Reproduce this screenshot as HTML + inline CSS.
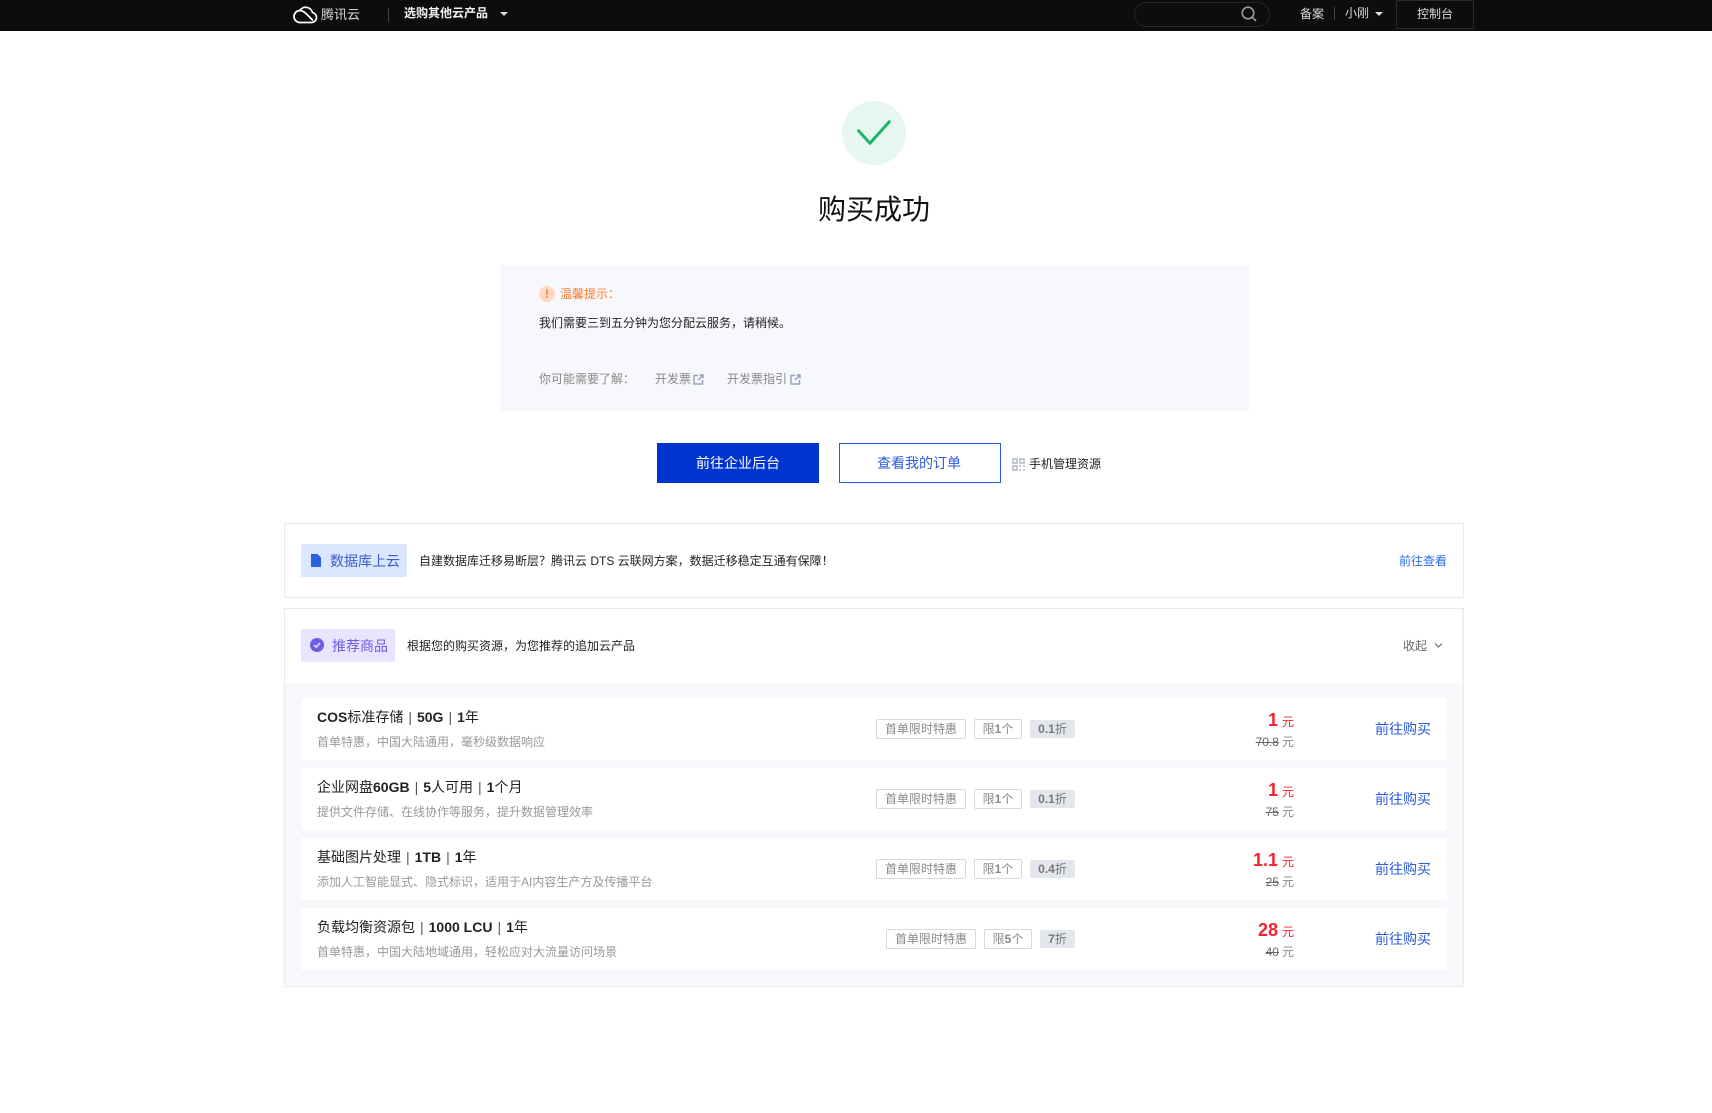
<!DOCTYPE html>
<html lang="zh-CN">
<head>
<meta charset="utf-8">
<title>购买成功</title>
<style>
html,body{margin:0;padding:0;background:#fff}
body{width:1712px;height:1113px;position:relative;overflow:hidden;font-family:"Liberation Sans","Noto Sans CJK SC",sans-serif;font-size:12px;color:#222;filter:blur(.35px)}
.a{position:absolute;white-space:nowrap}
.t{position:absolute;white-space:nowrap;line-height:20px;height:20px}
b{font-weight:700}
.row{position:absolute;left:301px;width:1146px;height:62px;background:#fff}
.name{position:absolute;left:16px;top:9px;font-size:14px;line-height:20px;color:#222;white-space:nowrap}
.name i{font-style:normal;color:#555;font-weight:400;padding:0 5px}
.desc{position:absolute;left:16px;top:34px;font-size:12px;line-height:20px;color:#999;white-space:nowrap}
.tag{position:absolute;top:21px;height:18px;line-height:18px;border:1px solid #d5d9e2;border-radius:2px;text-align:center;color:#888;font-size:12px;box-sizing:content-box}
.tag.g{top:22px;height:18px;border:0;background:#e3e6ec;color:#777}
.pr{position:absolute;right:153px;top:12px;line-height:20px;color:#f5222d;font-size:12px;white-space:nowrap}
.pr b{font-size:18px;margin-right:4px}
.old{position:absolute;right:153px;top:34px;line-height:20px;color:#888;font-size:12px;white-space:nowrap}
.old s{color:#666;margin-right:3px}
.buy{position:absolute;left:1074px;top:21px;line-height:20px;font-size:14px;color:#2b5bdc;white-space:nowrap}
</style>
</head>
<body>
<!-- top bar -->
<div class="a" style="left:0;top:0;width:1712px;height:31px;background:#0c0d0f"></div>
<svg class="a" style="left:293px;top:5px" width="26" height="20" viewBox="0 0 26 20" fill="none" stroke="#fff" stroke-width="1.700" stroke-linecap="round" stroke-linejoin="round"><path d="M7 17.500h11.500a5 5 0 0 0 1-9.900A7 7 0 0 0 6.800 5.500"/><path d="M7 17.500a6 6 0 0 1 0-12c2.500 0 4.500 1.500 6.500 3.500l6 6"/></svg>
<div class="t" style="left:321px;top:5px;font-size:13px;color:#d8d8d8">腾讯云</div>
<div class="a" style="left:388px;top:8px;width:1px;height:14px;background:#444"></div>
<div class="t" style="left:404px;top:3px;font-size:12px;font-weight:700;color:#f2f2f2">选购其他云产品</div>
<div class="a" style="left:500px;top:12px;width:0;height:0;border-left:4px solid transparent;border-right:4px solid transparent;border-top:4px solid #ddd"></div>
<div class="a" style="left:1134px;top:2px;width:134px;height:23px;border:1px solid #24262a;border-radius:13px"></div>
<svg class="a" style="left:1240px;top:5px" width="18" height="18" viewBox="0 0 18 18" fill="none" stroke="#9a9a9a" stroke-width="1.600"><circle cx="8" cy="8" r="5.800"/><path d="M12.200 12.200L16 16"/></svg>
<div class="t" style="left:1300px;top:4px;color:#d8d8d8">备案</div>
<div class="a" style="left:1334px;top:7px;width:1px;height:13px;background:#444"></div>
<div class="t" style="left:1345px;top:3px;color:#d8d8d8">小刚</div>
<div class="a" style="left:1375px;top:12px;width:0;height:0;border-left:4px solid transparent;border-right:4px solid transparent;border-top:4px solid #ddd"></div>
<div class="a" style="left:1396px;top:0;width:76px;height:27px;border:1px solid #2a2c30;border-radius:2px;text-align:center;line-height:27px;color:#d8d8d8">控制台</div>

<!-- success -->
<div class="a" style="left:842px;top:101px;width:64px;height:64px;border-radius:50%;background:#e8f6f0"></div>
<svg class="a" style="left:842px;top:101px" width="64" height="64" fill="none"><path d="M16.500 29.700L28 42.300L47.300 20.700" stroke="#1cb56b" stroke-width="3" stroke-linecap="round" stroke-linejoin="round"/></svg>
<div class="a" style="left:818px;top:190px;width:112px;text-align:center;font-size:28px;line-height:40px;color:#111">购买成功</div>

<!-- notice -->
<div class="a" style="left:500px;top:265px;width:749px;height:146px;background:#f7f8fc"></div>
<div class="a" style="left:539px;top:286px;width:16px;height:16px;border-radius:50%;background:#ffd9c6;color:#ff7a30;font-size:12px;font-weight:700;line-height:16px;text-align:center">!</div>
<div class="t" style="left:560px;top:284px;color:#ff7a30">温馨提示：</div>
<div class="t" style="left:539px;top:313px;color:#222">我们需要三到五分钟为您分配云服务，请稍候。</div>
<div class="t" style="left:539px;top:369px;color:#888">你可能需要了解：</div>
<div class="t" style="left:655px;top:369px;color:#888">开发票</div>
<svg class="a" style="left:693px;top:374px" width="11" height="11" viewBox="0 0 11 11" fill="none" stroke="#9aa5bd" stroke-width="1.500"><path d="M5 1.500H1v8.500h8.500V6M6.500 1H10v3.500M10 1L5 6"/></svg>
<div class="t" style="left:727px;top:369px;color:#888">开发票指引</div>
<svg class="a" style="left:790px;top:374px" width="11" height="11" viewBox="0 0 11 11" fill="none" stroke="#9aa5bd" stroke-width="1.500"><path d="M5 1.500H1v8.500h8.500V6M6.500 1H10v3.500M10 1L5 6"/></svg>

<!-- buttons -->
<div class="a" style="left:657px;top:443px;width:162px;height:40px;background:#0034cf;color:#fff;font-size:14px;line-height:40px;text-align:center">前往企业后台</div>
<div class="a" style="left:839px;top:443px;width:158px;height:38px;padding-right:2px;border:1px solid #2a5ae8;background:#fff;color:#2b5bdc;font-size:14px;line-height:38px;text-align:center">查看我的订单</div>
<svg class="a" style="left:1012px;top:458px" width="13" height="13" viewBox="0 0 13 13" fill="#c3c9d6"><path d="M0 0h6v6H0zM2 2v2h2V2zM7 0h6v6H7zM9 2v2h2V2zM0 7h6v6H0zM2 9v2h2V9zM7 7h2v2H7zM11 7h2v2h-2zM7 11h2v2H7zM11 11h2v2h-2z" fill-rule="evenodd"/></svg>
<div class="t" style="left:1029px;top:454px;color:#222">手机管理资源</div>

<!-- card 1 -->
<div class="a" style="left:284px;top:523px;width:1178px;height:73px;border:1px solid #e8eaef"></div>
<div class="a" style="left:301px;top:544px;width:106px;height:33px;background:#dbe6ff;border-radius:2px"></div>
<svg class="a" style="left:310px;top:554px" width="12" height="13" viewBox="0 0 12 13" fill="#2b5fe0"><path d="M1 0h6.500L11 3.500V13H1z"/></svg>
<div class="t" style="left:330px;top:551px;font-size:14px;color:#3a5ccc">数据库上云</div>
<div class="t" style="left:419px;top:551px;color:#222">自建数据库迁移易断层？腾讯云 DTS 云联网方案，数据迁移稳定互通有保障！</div>
<div class="t" style="left:1399px;top:551px;color:#2a6cf0">前往查看</div>

<!-- card 2 -->
<div class="a" style="left:284px;top:608px;width:1178px;height:377px;border:1px solid #e8eaef;background:#f6f8fc"></div>
<div class="a" style="left:285px;top:609px;width:1177px;height:74px;background:#fff"></div>
<div class="a" style="left:301px;top:629px;width:94px;height:33px;background:#e9e5ff;border-radius:2px"></div>
<svg class="a" style="left:310px;top:638px" width="14" height="14" viewBox="0 0 14 14"><circle cx="7" cy="7" r="7" fill="#6c5ce7"/><path d="M4 7l2.200 2.200L10 5" fill="none" stroke="#e9e5ff" stroke-width="1.500"/></svg>
<div class="t" style="left:332px;top:636px;font-size:14px;color:#6c5ce7">推荐商品</div>
<div class="t" style="left:407px;top:636px;color:#222">根据您的购买资源，为您推荐的追加云产品</div>
<div class="t" style="left:1403px;top:636px;color:#666">收起</div>
<svg class="a" style="left:1434px;top:642px" width="9" height="7" fill="none" stroke="#666" stroke-width="1.100"><path d="M1 1.500l3.500 3.500L8 1.500"/></svg>

<div class="row" style="top:698px">
  <div class="name"><b>COS</b>标准存储<i>|</i><b>50G</b><i>|</i><b>1</b>年</div>
  <div class="desc">首单特惠，中国大陆通用，毫秒级数据响应</div>
  <div class="tag" style="left:575px;width:88px">首单限时特惠</div>
  <div class="tag" style="left:673px;width:46px">限<b>1</b>个</div>
  <div class="tag g" style="left:729px;width:45px"><b>0.1</b>折</div>
  <div class="pr"><b>1</b>元</div>
  <div class="old"><s>70.8</s>元</div>
  <div class="buy">前往购买</div>
</div>
<div class="row" style="top:768px">
  <div class="name">企业网盘<b>60GB</b><i>|</i><b>5</b>人可用<i>|</i><b>1</b>个月</div>
  <div class="desc">提供文件存储、在线协作等服务，提升数据管理效率</div>
  <div class="tag" style="left:575px;width:88px">首单限时特惠</div>
  <div class="tag" style="left:673px;width:46px">限<b>1</b>个</div>
  <div class="tag g" style="left:729px;width:45px"><b>0.1</b>折</div>
  <div class="pr"><b>1</b>元</div>
  <div class="old"><s>75</s>元</div>
  <div class="buy">前往购买</div>
</div>
<div class="row" style="top:838px">
  <div class="name">基础图片处理<i>|</i><b>1TB</b><i>|</i><b>1</b>年</div>
  <div class="desc">添加人工智能显式、隐式标识，适用于AI内容生产方及传播平台</div>
  <div class="tag" style="left:575px;width:88px">首单限时特惠</div>
  <div class="tag" style="left:673px;width:46px">限<b>1</b>个</div>
  <div class="tag g" style="left:729px;width:45px"><b>0.4</b>折</div>
  <div class="pr"><b>1.1</b>元</div>
  <div class="old"><s>25</s>元</div>
  <div class="buy">前往购买</div>
</div>
<div class="row" style="top:908px">
  <div class="name">负载均衡资源包<i>|</i><b>1000 LCU</b><i>|</i><b>1</b>年</div>
  <div class="desc">首单特惠，中国大陆地域通用，轻松应对大流量访问场景</div>
  <div class="tag" style="left:585px;width:88px">首单限时特惠</div>
  <div class="tag" style="left:683px;width:46px">限<b>5</b>个</div>
  <div class="tag g" style="left:739px;width:35px"><b>7</b>折</div>
  <div class="pr"><b>28</b>元</div>
  <div class="old"><s>40</s>元</div>
  <div class="buy">前往购买</div>
</div>
</body>
</html>
